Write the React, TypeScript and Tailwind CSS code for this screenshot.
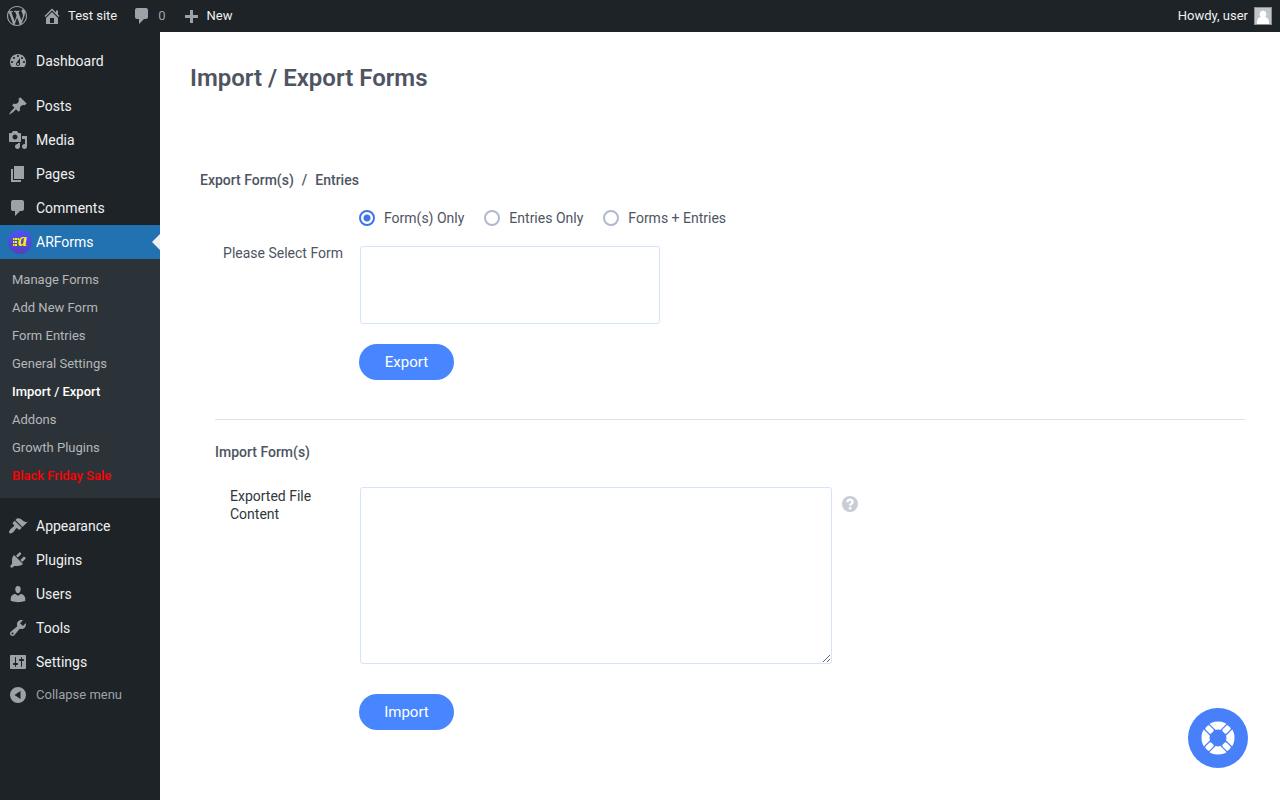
import React, { useState } from 'react';
import clsx from 'clsx';

const icons = {
  wordpress:
    'M20 10c0-5.51-4.49-10-10-10C4.48 0 0 4.49 0 10c0 5.52 4.48 10 10 10 5.51 0 10-4.48 10-10zM7.78 15.37L4.37 6.22c.55-.02 1.17-.08 1.17-.08.5-.06.44-1.13-.06-1.11 0 0-1.45.11-2.37.11-.18 0-.37 0-.58-.01C4.12 2.69 6.87 1.11 10 1.11c2.33 0 4.45.87 6.05 2.34-.68-.11-1.65.39-1.65 1.58 0 .74.45 1.36.9 2.1.35.61.55 1.36.55 2.46 0 1.49-1.4 5-1.4 5l-3.03-8.37c.54-.02.82-.17.82-.17.5-.05.44-1.25-.06-1.22 0 0-1.44.12-2.38.12-.87 0-2.33-.12-2.33-.12-.5-.03-.56 1.2-.06 1.22l.92.08 1.26 3.41zM17.41 10c.24-.64.74-1.87.43-4.25.7 1.29 1.05 2.71 1.05 4.25 0 3.29-1.73 6.24-4.4 7.78.97-2.59 1.94-5.2 2.92-7.78zM6.1 18.09C3.12 16.65 1.11 13.53 1.11 10c0-1.3.23-2.48.72-3.59C3.25 10.3 4.67 14.2 6.1 18.09zm4.03-6.63l2.58 6.98c-.86.29-1.76.45-2.71.45-.79 0-1.57-.11-2.29-.33.81-2.38 1.62-4.74 2.42-7.1z',
  home: 'M16 8.5l1.53 1.53-1.06 1.06L10 4.6l-6.47 6.49-1.06-1.06L10 2.5l4 4v-2h2v4zm-6-2.46l6 5.99V18H4v-5.97zM12 17v-5H8v5h4z',
  plus: 'M17 9v3h-5v5H9v-5H4V9h5V4h3v5h5z',
  dashboard:
    'M3.76 16h12.48c1.1-1.37 1.76-3.11 1.76-5 0-4.42-3.58-8-8-8s-8 3.58-8 8c0 1.89.66 3.63 1.76 5zM10 4c.55 0 1 .45 1 1s-.45 1-1 1-1-.45-1-1 .45-1 1-1zM6 6c.55 0 1 .45 1 1s-.45 1-1 1-1-.45-1-1 .45-1 1-1zm8 0c.55 0 1 .45 1 1s-.45 1-1 1-1-.45-1-1 .45-1 1-1zm-5.37 5.55L12 7v6c0 1.1-.9 2-2 2s-2-.9-2-2c0-.57.24-1.08.63-1.45zM4 10c.55 0 1 .45 1 1s-.45 1-1 1-1-.45-1-1 .45-1 1-1zm12 0c.55 0 1 .45 1 1s-.45 1-1 1-1-.45-1-1 .45-1 1-1zm-5 3c0-.55-.45-1-1-1s-1 .45-1 1 .45 1 1 1 1-.45 1-1z',
  post: 'M10.44 3.02l1.82-1.82 6.36 6.35-1.83 1.82c-1.05-.68-2.48-.57-3.41.36l-.75.75c-.92.93-1.04 2.35-.35 3.41l-1.83 1.82-2.41-2.41-2.8 2.79c-.42.42-3.38 2.71-3.8 2.29s1.86-3.39 2.28-3.81l2.79-2.79L4.1 9.36l1.83-1.82c1.05.69 2.48.57 3.4-.36l.75-.75c.93-.92 1.05-2.35.36-3.41z',
  media:
    'M13 11V4c0-.55-.45-1-1-1h-1.67L9 1H5L3.67 3H2c-.55 0-1 .45-1 1v7c0 .55.45 1 1 1h10c.55 0 1-.45 1-1zM7 4.5c1.38 0 2.5 1.12 2.5 2.5S8.38 9.5 7 9.5 4.5 8.38 4.5 7 5.62 4.5 7 4.5zM14 6h5v10.5c0 1.38-1.12 2.5-2.5 2.5S14 17.88 14 16.5s1.12-2.5 2.5-2.5c.17 0 .34.02.5.05V9h-3V6zm-4 8.05V13h2v3.5c0 1.38-1.12 2.5-2.5 2.5S7 17.88 7 16.5 8.12 14 9.5 14c.17 0 .34.02.5.05z',
  page: 'M6 15V2h10v13H6zm-1 1h8v2H3V5h2v11z',
  comment: 'M5 2h9c1.1 0 2 .9 2 2v7c0 1.1-.9 2-2 2h-2l-5 5v-5H5c-1.1 0-2-.9-2-2V4c0-1.1.9-2 2-2z',
  appearance:
    'M14.48 11.06L7.41 3.99l1.5-1.5c.5-.56 2.3-.47 3.51.32 1.21.8 1.43 1.28 2.91 2.1 1.18.64 2.45 1.26 4.45.85zm-.71.71L6.7 4.7 4.93 6.47c-.39.39-.39 1.02 0 1.41l1.06 1.06c.39.39.39 1.03 0 1.42-.6.6-1.43 1.11-2.21 1.69-.35.26-.7.53-1.01.84C1.43 14.23.4 16.08 1.4 17.07c.99 1 2.84-.03 4.18-1.36.31-.31.58-.66.85-1.02.57-.78 1.08-1.61 1.69-2.21.39-.39 1.02-.39 1.41 0l1.06 1.06c.39.39 1.02.39 1.41 0z',
  plugin:
    'M13.11 4.36L9.87 7.6 8 5.73l3.24-3.24c.35-.34 1.05-.2 1.56.32.52.51.66 1.21.31 1.55zm-8 1.77l.91-1.12 9.01 9.01-1.19.84c-.71.71-2.63 1.16-3.82 1.16H6.14L4.9 17.26c-.59.59-1.54.59-2.12 0-.59-.58-.59-1.53 0-2.12l1.24-1.24v-3.88c0-1.13.4-3.19 1.09-3.89zm7.26 3.97l3.24-3.24c.34-.35 1.04-.21 1.55.31.52.51.66 1.21.31 1.55l-3.24 3.25z',
  users:
    'M10 9.25c-2.27 0-2.73-3.44-2.73-3.44C7 4.02 7.82 2 9.97 2c2.16 0 2.98 2.02 2.71 3.81 0 0-.41 3.44-2.68 3.44zm0 2.57L12.72 10c2.39 0 4.52 2.33 4.52 4.53v2.49s-3.65 1.13-7.24 1.13c-3.65 0-7.24-1.13-7.24-1.13v-2.49c0-2.25 1.94-4.48 4.47-4.48z',
  tools:
    'M16.68 9.77c-1.34 1.34-3.3 1.67-4.95.99l-5.41 6.52c-.99.99-2.59.99-3.58 0s-.99-2.59 0-3.57l6.52-5.42c-.68-1.65-.35-3.61.99-4.95 1.28-1.28 3.12-1.62 4.72-1.06l-2.89 2.89 2.82 2.82 2.86-2.87c.53 1.58.18 3.39-1.08 4.65zM3.81 16.21c.4.39 1.04.39 1.43 0 .4-.4.4-1.04 0-1.43-.39-.4-1.03-.4-1.43 0-.39.39-.39 1.03 0 1.43z',
  settings:
    'M18 16V4c0-.55-.45-1-1-1H3c-.55 0-1 .45-1 1v12c0 .55.45 1 1 1h14c.55 0 1-.45 1-1zM8 11h1c.55 0 1 .45 1 1s-.45 1-1 1H8v1.5c0 .28-.22.5-.5.5s-.5-.22-.5-.5V13H6c-.55 0-1-.45-1-1s.45-1 1-1h1V5.5c0-.28.22-.5.5-.5s.5.22.5.5V11zm5-2h-1c-.55 0-1-.45-1-1s.45-1 1-1h1V5.5c0-.28.22-.5.5-.5s.5.22.5.5V7h1c.55 0 1 .45 1 1s-.45 1-1 1h-1v5.500c0 .28-.22.5-.5.5s-.5-.22-.5-.5V9z',
  collapse: 'M10 2a8 8 0 1 0 0 16 8 8 0 0 0 0-16zm2.5 4v8L6.5 10z',
};

type IconName = keyof typeof icons;

function Icon({ name }: { name: IconName }) {
  return (
    <svg viewBox="0 0 20 20" className="size-5 shrink-0 fill-[#9ca2a7]" fillRule="evenodd" aria-hidden="true">
      <path d={icons[name]} />
    </svg>
  );
}

function ARFormsLogo() {
  return (
    <svg viewBox="0 0 24 24" className="size-6 shrink-0" aria-hidden="true">
      <defs>
        <linearGradient id="arf" x1="0" y1="0" x2="0" y2="1">
          <stop offset="0" stopColor="#4a55f5" />
          <stop offset="1" stopColor="#5540bd" />
        </linearGradient>
      </defs>
      <circle cx="12" cy="12" r="12" fill="url(#arf)" />
      <path
        d="M5 8h1.500v2H5zM7 8h2v2H7zM9.500 8h1.500v2H9.500zM5 11h1.500v2H5zM7 11h2v2H7zM5 14h1.500v2H5zM7 14h2v2H7z"
        fill="#fff200"
      />
      <text x="10" y="16" fill="#fff200" className="font-['Liberation_Serif',serif] text-[18px] font-bold italic">
        a
      </text>
    </svg>
  );
}

const topMenu: { label: string; icon: IconName }[] = [
  { label: 'Posts', icon: 'post' },
  { label: 'Media', icon: 'media' },
  { label: 'Pages', icon: 'page' },
  { label: 'Comments', icon: 'comment' },
];

const subMenu = [
  'Manage Forms',
  'Add New Form',
  'Form Entries',
  'General Settings',
  'Import / Export',
  'Addons',
  'Growth Plugins',
  'Black Friday Sale',
];

const bottomMenu: { label: string; icon: IconName }[] = [
  { label: 'Appearance', icon: 'appearance' },
  { label: 'Plugins', icon: 'plugin' },
  { label: 'Users', icon: 'users' },
  { label: 'Tools', icon: 'tools' },
  { label: 'Settings', icon: 'settings' },
];

const exportTypes = [
  { value: 'forms', label: 'Form(s) Only' },
  { value: 'entries', label: 'Entries Only' },
  { value: 'both', label: 'Forms + Entries' },
];

function MenuItem({ label, icon }: { label: string; icon: IconName }) {
  return (
    <a href="#" className="flex h-[34px] items-center gap-2 pl-2 text-sm text-[#f0f0f1] hover:text-[#72aee6]">
      <Icon name={icon} />
      {label}
    </a>
  );
}

function AdminBar() {
  return (
    <header className="flex h-8 items-center justify-between bg-[#1d2327] px-2 text-[13px] text-[#f0f0f1]">
      <nav className="flex items-center gap-[15px]">
        <a href="#" aria-label="About WordPress" className="-ml-px">
          <Icon name="wordpress" />
        </a>
        <a href="#" className="flex items-center gap-[6px]">
          <Icon name="home" />
          Test site
        </a>
        <a href="#" className="flex items-center gap-[6px] text-[#9ca2a7]">
          <Icon name="comment" />
          0
        </a>
        <a href="#" className="flex items-center gap-[6px]">
          <Icon name="plus" />
          New
        </a>
      </nav>
      <a href="#" className="flex items-center gap-[6px]">
        Howdy, user
        <svg viewBox="0 0 18 18" className="size-[18px]" aria-hidden="true">
          <path d="M0 0h18v18H0z" fill="#8c8f94" />
          <path d="M1 1h16v16H1z" fill="#c3c4c7" />
          <path d="M9 3.5a3.5 3.7 0 0 1 2.2 6.5c2.8.6 3.8 2.5 3.8 7H3c0-4.5 1-6.4 3.8-7A3.5 3.7 0 0 1 9 3.5z" fill="#fff" />
        </svg>
      </a>
    </header>
  );
}

function Sidebar() {
  return (
    <aside className="w-40 shrink-0 bg-[#1d2327] pt-3">
      <nav>
        <MenuItem label="Dashboard" icon="dashboard" />
        <div className="mt-[11px]">
          {topMenu.map((item) => (
            <MenuItem key={item.label} {...item} />
          ))}
        </div>
        <a href="#" className="relative flex h-[34px] items-center gap-1 bg-[#2271b1] pl-2 text-sm text-white">
          <ARFormsLogo />
          ARForms
          <span className="absolute right-0 border-y-8 border-r-8 border-y-transparent border-r-[#f0f0f1]" />
        </a>
        <ul className="bg-[#2c3338] pt-[7px] pb-2 text-[13px]">
          {subMenu.map((label) => (
            <li key={label}>
              <a
                href="#"
                className={clsx(
                  'flex h-7 items-center pl-3',
                  label === 'Import / Export' && 'font-medium text-white',
                  label === 'Black Friday Sale' && 'font-medium text-[#ff0000]',
                  label !== 'Import / Export' && label !== 'Black Friday Sale' && 'text-[#b4b7b9]'
                )}
              >
                {label}
              </a>
            </li>
          ))}
        </ul>
        <div className="mt-[11px]">
          {bottomMenu.map((item) => (
            <MenuItem key={item.label} {...item} />
          ))}
        </div>
        <button type="button" className="flex h-8 w-full items-center gap-2 pl-2 text-[13px] text-[#9ca2a7]">
          <Icon name="collapse" />
          Collapse menu
        </button>
      </nav>
    </aside>
  );
}

function SubmitButton({ label }: { label: string }) {
  return (
    <button
      type="button"
      className="ml-[144px] block h-9 w-[95px] rounded-full bg-[#4786ff] text-[15px] text-white hover:bg-[#3873e8]"
    >
      {label}
    </button>
  );
}

function ImportExport() {
  const [exportType, setExportType] = useState('forms');

  return (
    <main className="grow bg-white pt-[30px] pr-[35px] pl-[30px] text-[#4e5462]">
      <h1 className="text-2xl font-semibold">Import / Export Forms</h1>

      <section className="mt-[76px] ml-[25px]">
        <h2 className="-ml-[15px] flex h-5 items-center gap-2 text-sm font-medium">
          <span>Export Form(s)</span>
          <span>/</span>
          <span>Entries</span>
        </h2>

        <div className="mt-[18px] ml-[144px] flex h-5 gap-5 text-sm">
          {exportTypes.map((type) => (
            <label key={type.value} className="flex items-center gap-[9px]">
              <input
                type="radio"
                name="export_type"
                value={type.value}
                checked={exportType === type.value}
                onChange={() => setExportType(type.value)}
                className="size-4 appearance-none rounded-full border-2 border-[#b0b9cd] bg-white checked:border-[#3f74e7] checked:bg-[radial-gradient(circle,#3f74e7_3px,#fff_4px)]"
              />
              {type.label}
            </label>
          ))}
        </div>

        <div className="mt-[18px] flex">
          <label htmlFor="form_list" className="w-[145px] pr-[17px] text-right text-sm leading-[15px]">
            Please Select Form
          </label>
          <select
            id="form_list"
            multiple
            className="h-[78px] w-[300px] appearance-none rounded-[3px] border border-[#d5e3ff] bg-white"
          />
        </div>

        <div className="mt-5">
          <SubmitButton label="Export" />
        </div>
      </section>

      <hr className="mt-[39px] ml-[25px] border-[#dfe1e5]" />

      <section className="mt-[22px] ml-[25px]">
        <h2 className="text-sm font-medium">Import Form(s)</h2>
        <div className="mt-[25px] flex">
          <label htmlFor="import_content" className="w-[145px] pr-9 pl-[15px] text-sm leading-[18px] text-[#32373c]">
            Exported File Content
          </label>
          <textarea
            id="import_content"
            className="h-[177px] w-[472px] rounded-[3px] border border-[#d5e3ff] bg-white p-2 text-sm"
          />
          <button type="button" aria-label="Help" className="mt-[9px] ml-[10px] size-4">
            <svg viewBox="0 0 16 16" className="size-4" aria-hidden="true">
              <circle cx="8" cy="8" r="8" fill="#c9ccd4" />
              <path d="M5.4 6.3C5.4 2.8 10.6 2.8 10.6 6 10.6 8 8.1 7.6 8.1 9.8" fill="none" stroke="#fff" strokeWidth="2.4" />
              <path d="M6.8 11h2.6v2.4H6.8z" fill="#fff" />
            </svg>
          </button>
        </div>
        <div className="mt-[30px]">
          <SubmitButton label="Import" />
        </div>
      </section>
    </main>
  );
}

function HelpButton() {
  return (
    <button
      type="button"
      aria-label="Support"
      className="fixed right-8 bottom-8 flex size-[60px] items-center justify-center rounded-full bg-[#4880fa]"
    >
      <svg viewBox="-20 -20 40 40" className="size-10" aria-hidden="true">
        <circle r="12.5" fill="none" stroke="#fff" strokeWidth="8" />
        {[45, 135, 225, 315].map((angle) => (
          <g key={angle} transform={`rotate(${angle})`}>
            <path d="M7 -4h12v8H7z" fill="#4880fa" />
            <rect x="8" y="-2.8" width="8" height="5.6" rx="1.5" fill="#fff" />
          </g>
        ))}
      </svg>
    </button>
  );
}

export default function App() {
  return (
    <div className="flex min-h-screen flex-col font-[Roboto,sans-serif]">
      <AdminBar />
      <div className="flex grow">
        <Sidebar />
        <ImportExport />
      </div>
      <HelpButton />
    </div>
  );
}
